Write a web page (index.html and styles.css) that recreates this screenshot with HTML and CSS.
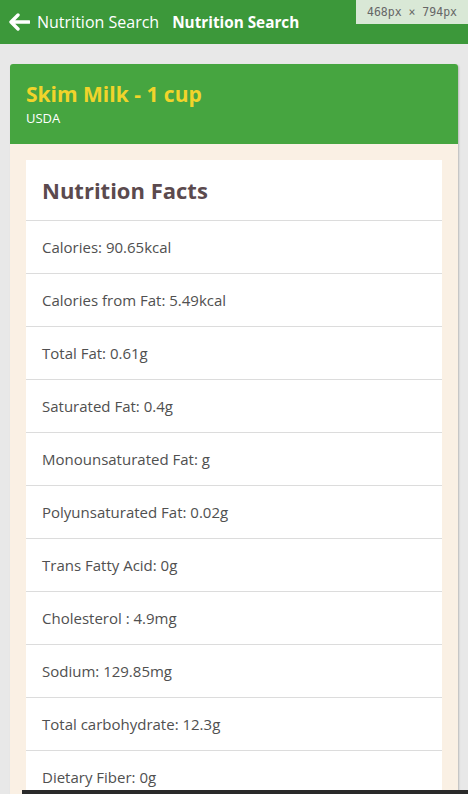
FILE: index.html
```html
<!DOCTYPE html>
<html>
<head>
<meta charset="utf-8">
<link rel="stylesheet" href="styles.css">
</head>
<body>
<header class="topbar">
  <svg class="back" width="22" height="18" viewBox="0 0 22 18"><path d="M10 2 L3 9 L10 16 M3 9 H21" fill="none" stroke="#fff" stroke-width="3.4" stroke-linecap="round" stroke-linejoin="round"/></svg>
  <span class="crumb">Nutrition Search</span>
  <span class="title">Nutrition Search</span>
</header>
<div class="sizebadge">468px × 794px</div>
<main class="page">
  <section class="card">
    <div class="card-head">
      <h1 class="food">Skim Milk - 1 cup</h1>
      <div class="source">USDA</div>
    </div>
    <div class="card-body">
      <ul class="facts">
        <li class="facts-title">Nutrition Facts</li>
        <li>Calories: 90.65kcal</li>
        <li>Calories from Fat: 5.49kcal</li>
        <li>Total Fat: 0.61g</li>
        <li>Saturated Fat: 0.4g</li>
        <li>Monounsaturated Fat: g</li>
        <li>Polyunsaturated Fat: 0.02g</li>
        <li>Trans Fatty Acid: 0g</li>
        <li>Cholesterol : 4.9mg</li>
        <li>Sodium: 129.85mg</li>
        <li>Total carbohydrate: 12.3g</li>
        <li>Dietary Fiber: 0g</li>
      </ul>
    </div>
  </section>
</main>
<div class="bottombar"></div>
</body>
</html>
```
FILE: styles.css
```css
html, body {
  margin: 0;
  padding: 0;
  background: #e8e8e8;
  font-family: "Open Sans", "Noto Sans", sans-serif;
  overflow: hidden;
  height: 794px;
}
.topbar {
  height: 44px;
  background: #3c983a;
  display: flex;
  align-items: center;
  padding-left: 8px;
  color: #fff;
  box-sizing: border-box;
}
.back { margin-right: 7px; }
.crumb { font-size: 16px; margin-right: 13px; }
.title { font-size: 15.3px; font-weight: 700; }
.sizebadge {
  position: absolute;
  top: 0;
  right: 0;
  width: 112px;
  height: 24px;
  background: #d9e8d6;
  color: #666;
  font-family: "DejaVu Sans Mono", monospace;
  font-size: 11.5px;
  display: flex;
  align-items: center;
  justify-content: center;
}
.page {
  padding: 20px 10px 0 10px;
}
.card {
  border-radius: 3px;
  overflow: hidden;
  box-shadow: 1px 1px 2px rgba(0,0,0,0.2);
  background: #faf0e4;
}
.card-head {
  background: #46a540;
  padding: 16px;
  height: 80px;
  box-sizing: border-box;
}
.food {
  margin: 0;
  color: #f1d42b;
  font-size: 21px;
  font-weight: 700;
  line-height: 29px;
}
.source {
  color: #fff;
  font-size: 13px;
  line-height: 18px;
}
.card-body {
  padding: 16px;
}
.facts {
  list-style: none;
  margin: 0;
  padding: 0;
  background: #fff;
}
.facts li {
  height: 53px;
  box-sizing: border-box;
  border-top: 1px solid #dcdcdc;
  padding: 0 16px;
  display: flex;
  align-items: center;
  color: #505050;
  font-size: 15px;
}
.facts li.facts-title {
  height: 60px;
  border-top: none;
  font-size: 22px;
  font-weight: 700;
  color: #5b4a4e;
}
.bottombar {
  position: fixed;
  left: 22px;
  right: 0;
  bottom: 0;
  height: 4px;
  background: #2a2a2a;
}
```
